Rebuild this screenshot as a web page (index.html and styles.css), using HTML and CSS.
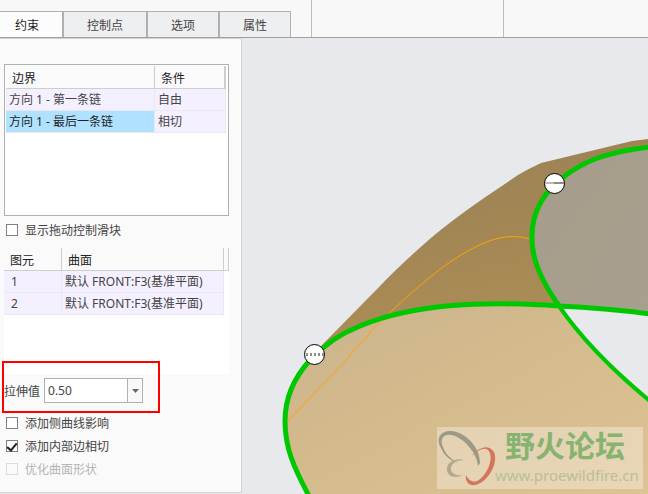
FILE: index.html
```
<!DOCTYPE html>
<html lang="zh-CN">
<head>
<meta charset="UTF-8">
<meta name="viewport" content="width=device-width, initial-scale=1.0">
<title>约束</title>
<link rel="stylesheet" href="styles.css">
</head>
<body>
    <header class="toolbar">
        <nav class="tabs">
            <button type="button" class="tab tab-first active">约束</button>
            <button type="button" class="tab tab-wide">控制点</button>
            <button type="button" class="tab">选项</button>
            <button type="button" class="tab">属性</button>
        </nav>
        <div class="tool-group"></div>
        <div class="tool-rest"></div>
    </header>

    <main class="workspace">
        <form class="panel">
            <div class="list-box">
                <table class="grid bounds">
                    <thead>
                        <tr><th class="col-bound">边界</th><th>条件</th></tr>
                    </thead>
                    <tbody>
                        <tr><td>方向 1 - 第一条链</td><td>自由</td></tr>
                        <tr><td class="selected">方向 1 - 最后一条链</td><td>相切</td></tr>
                    </tbody>
                </table>
            </div>

            <div class="check">
                <input type="checkbox" id="drag">
                <label for="drag">显示拖动控制滑块</label>
            </div>

            <div class="entity-box">
                <table class="grid entities">
                    <thead>
                        <tr><th class="col-entity">图元</th><th>曲面</th><th class="col-end"></th></tr>
                    </thead>
                    <tbody>
                        <tr><td>1</td><td>默认 FRONT:F3(基准平面)</td></tr>
                        <tr><td>2</td><td>默认 FRONT:F3(基准平面)</td></tr>
                    </tbody>
                </table>
            </div>

            <div class="stretch">
                <label for="stretch">拉伸值</label>
                <div class="combo">
                    <input type="text" id="stretch" value="0.50">
                    <button type="button" aria-label="拉伸值列表">
                        <svg width="7" height="4" viewBox="0 0 7 4"><path d="M0 0h7L3.5 4z" fill="#666"/></svg>
                    </button>
                </div>
                <div class="highlight"></div>
            </div>

            <div class="options">
                <div class="check">
                    <input type="checkbox" id="side">
                    <label for="side">添加侧曲线影响</label>
                </div>
                <div class="check">
                    <input type="checkbox" id="inner" checked>
                    <label for="inner">添加内部边相切</label>
                </div>
                <div class="check">
                    <input type="checkbox" id="optimize" disabled>
                    <label for="optimize">优化曲面形状</label>
                </div>
            </div>
        </form>

        <section class="viewport">
            <svg class="model" viewBox="242 38 406 456" preserveAspectRatio="xMinYMin slice">
                <defs>
                    <linearGradient id="brown" x1="0" y1="0" x2="0.3" y2="1">
                        <stop offset="0" stop-color="#9a8158"/>
                        <stop offset="0.5" stop-color="#a28654"/>
                        <stop offset="1" stop-color="#ad8e57"/>
                    </linearGradient>
                    <linearGradient id="tan" x1="0" y1="0" x2="1" y2="1">
                        <stop offset="0" stop-color="#cab28e"/>
                        <stop offset="0.45" stop-color="#d4bb8c"/>
                        <stop offset="1" stop-color="#dec393"/>
                    </linearGradient>
                    <linearGradient id="grey" x1="0" y1="0" x2="1" y2="1">
                        <stop offset="0" stop-color="#a69c8b"/>
                        <stop offset="1" stop-color="#a8a08e"/>
                    </linearGradient>
                </defs>

                <!-- outer surface -->
                <path fill="url(#brown)" d="M660 139H648L632 141L541 163Q530 168 518 175L484 198Q445 225 423 245Q397 268 380 286L323 344L314 354L345 345L559 306L648 148Z"/>
                <!-- inner face -->
                <path fill="url(#grey)" d="M648 147C605 152 584 162 566 175C547 189 532 209 532 236C531 260 543 283 559 306Q606 308 648 314Z"/>
                <!-- front surface -->
                <path fill="url(#tan)" d="M559 306C485 301 415 303 360 326C327 339 285 372 285 421C285 447 293 466 309 496H648V399C616 373 581 338 559 306Z"/>

                <path class="guide" d="M287 422L345 361L377 325C412 291 435 272 456 258C488 238 508 233 530 239"/>
                <path class="edge" d="M650 147C605 152 584 162 566 175C547 189 532 209 532 236C531 260 543 283 559 306"/>
                <path class="edge thin" d="M559 306C581 338 616 373 650 401"/>
                <path class="edge" d="M650 314Q606 308 559 306C485 301 415 303 360 326C327 339 285 372 285 421C285 447 293 466 309 496"/>

                <circle class="handle" cx="554.5" cy="183.5" r="10"/>
                <path d="M545 183h10" stroke="#bdbba9" stroke-width="2"/>
                <path d="M554 183h10" stroke="#8d8d82" stroke-width="2"/>
                <circle class="handle" cx="314.5" cy="354.5" r="10"/>
                <path d="M306 354.500h18" stroke="#8d8d82" stroke-width="3" stroke-dasharray="2 2"/>

                <!-- forum mark -->
                <rect x="437" y="427" width="206" height="62" fill="#fff" fill-opacity="0.33"/>
                <path fill="#9b9a84" d="M441 448C435 437 442 430 452 431C466 433 480 447 480 463L478 466C477 453 465 440 455 436C444 432 439 439 443 447C446 456 453 460 458 463C449 460 444 455 441 448Z"/>
                <path fill="#b1a98d" d="M464 460C455 457 446 463 447 470C448 478 457 478 463 475C457 476 452 474 451 470C450 464 456 460 464 460Z"/>
                <path fill="#d5765b" d="M471 457C479 446 489 444 494 452C499 464 487 483 475 485C468 486 465 481 466 475C469 481 474 484 480 479C489 472 494 456 488 450C484 447 478 450 471 457Z"/>
                <text class="mark-name" x="505" y="457">野火论坛</text>
                <text class="mark-url" x="495" y="481">www.proewildfire.cn</text>
            </svg>
        </section>
    </main>
</body>
</html>
```
FILE: styles.css
```
* {
    box-sizing: border-box;
}

body {
    margin: 0;
    min-height: 100vh;
    display: flex;
    flex-direction: column;
    font-family: "Noto Sans", "Noto Sans CJK SC", sans-serif;
    font-size: 12px;
    color: #444;
    background-color: #e8e9ed;
}

button, input {
    font: inherit;
    color: inherit;
    margin: 0;
    padding: 0;
}

.toolbar {
    display: flex;
    height: 38px;
    background-color: #f8f8f8;
    border-bottom: 1px solid #a0a0a4;
}

.tabs {
    display: flex;
    align-items: flex-end;
    width: 311px;
}

.tab {
    width: 72px;
    height: 26px;
    border: 1px solid #aeb0b2;
    border-bottom: none;
    background-color: #eeeff1;
}

.tab-first {
    width: 63px;
    border-left: none;
    padding-right: 8px;
}

.tab-wide {
    width: 84px;
}

.tab.active {
    background-color: #fcfcfc;
    color: #222;
}

.tool-group {
    width: 193px;
    border-left: 1px solid #bcbcbc;
    border-right: 1px solid #bcbcbc;
}

.tool-rest {
    flex: 1;
}

.workspace {
    flex: 1;
    display: grid;
    grid-template-columns: 242px 1fr;
}

.panel {
    padding: 25px 12px 8px 4px;
    margin-bottom: 1px;
    background-color: #fafafa;
    border: 1px solid #d2d3d5;
    border-left: none;
}

.list-box {
    height: 152px;
    padding: 1px;
    background-color: #fff;
    border: 1px solid #aeb0b2;
}

.grid {
    border-spacing: 0;
    table-layout: fixed;
}

.grid th {
    height: 23px;
    padding: 2px 0 0 6px;
    font-weight: normal;
    text-align: left;
    color: #222;
    background-color: #fafafa;
    border-right: 1px solid #ccced0;
    border-bottom: 1px solid #ccced0;
}

.grid td {
    height: 22px;
    padding: 0 0 1px 3px;
    white-space: nowrap;
    background-color: #f5f0ff;
    border-right: 1px solid #e8e8ee;
    border-bottom: 1px solid #e8e8ee;
}

.bounds {
    width: 220px;
}

.bounds .col-bound {
    width: 149px;
}

.bounds th:last-child {
    border-right-width: 2px;
}

.grid .selected {
    color: #222;
    background-color: #b0e2ff;
}

.check {
    display: flex;
    align-items: center;
    gap: 7px;
    height: 23px;
    padding-left: 2px;
}

.check input {
    appearance: none;
    display: grid;
    place-items: center;
    width: 12px;
    height: 12px;
    border: 1px solid #808080;
    background-color: #fff;
}

.check input:checked::after {
    content: "";
    width: 4px;
    height: 8px;
    margin-bottom: 2px;
    border: solid #222;
    border-width: 0 2px 2px 0;
    transform: rotate(40deg);
}

.check input:disabled {
    border-color: #ddd;
    background-color: #fafafa;
}

.check input:disabled + label {
    color: #b4b4b4;
}

.list-box + .check {
    margin: 2px 0 7px;
}

.entity-box {
    height: 126px;
    background-color: #fff;
}

.entities {
    width: 225px;
}

.entities .col-entity {
    width: 58px;
}

.entities .col-end {
    width: 5px;
    padding: 0;
}

.entities td:first-child {
    padding-left: 7px;
}

.stretch {
    position: relative;
    display: flex;
    align-items: center;
    gap: 4px;
    margin-top: 4px;
}

.combo {
    display: flex;
    width: 99px;
    height: 25px;
    border: 1px solid #aeb0b2;
    background-color: #fff;
}

.combo input {
    flex: 1;
    min-width: 0;
    padding-left: 3px;
    border: none;
    background: none;
}

.combo button {
    display: grid;
    place-items: center;
    width: 15px;
    border: none;
    border-left: 1px solid #aeb0b2;
    background-color: #f8f8f8;
}

.highlight {
    position: absolute;
    top: -17px;
    left: -2px;
    width: 158px;
    height: 52px;
    border: 2px solid #f00;
    pointer-events: none;
}

.options {
    margin-top: 8px;
}

.viewport {
    position: relative;
    overflow: hidden;
}

.model {
    position: absolute;
    width: 100%;
    height: 100%;
}

.edge {
    fill: none;
    stroke: #00c800;
    stroke-width: 5;
}

.edge.thin {
    stroke-width: 4;
}

.guide {
    fill: none;
    stroke: #ffa500;
    stroke-width: 1;
}

.handle {
    fill: #fff;
    stroke: #000;
    stroke-width: 1;
}

.mark-name {
    font-family: "Noto Sans CJK SC", sans-serif;
    font-size: 30px;
    font-weight: bold;
    fill: #87b371;
}

.mark-url {
    font-family: "Noto Sans", sans-serif;
    font-size: 15px;
    fill: #b9bf98;
}
```
